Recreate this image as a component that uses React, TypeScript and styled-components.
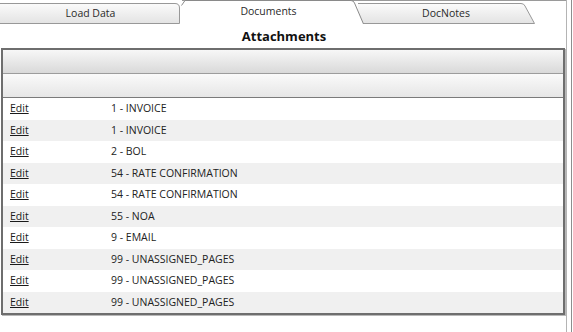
import React from "react";
import styled, { createGlobalStyle } from "styled-components";

const Global = createGlobalStyle`
  html, body { margin: 0; padding: 0; background: #ffffff; }
  body { font-family: "Open Sans", "Noto Sans", sans-serif; color: #222; }
`;

const Page = styled.div`
  display: flex;
  width: 573px;
  height: 332px;
  overflow: hidden;
`;

const Content = styled.div`
  width: 566px;
  display: flex;
  flex-direction: column;
`;

const Gutter = styled.div`
  width: 4px;
  border-left: 1px solid #b4b4b4;
  border-right: 1px solid #8e8e8e;
`;

const TabStrip = styled.div`
  position: relative;
  display: flex;
  height: 24px;
  &::before {
    content: "";
    position: absolute;
    left: 182px;
    right: 0;
    top: 0;
    height: 1px;
    background: #9a9a9a;
  }
`;

const Tab = styled.div<{ $w: number; $active?: boolean; $shift?: number }>`
  position: relative;
  width: ${(p) => p.$w}px;
  margin-left: ${(p) => p.$shift ?? 0}px;
  height: 24px;
  z-index: ${(p) => (p.$active ? 2 : 1)};
  display: flex;
  justify-content: center;
  align-items: ${(p) => (p.$active ? "flex-start" : "center")};
  padding-top: ${(p) => (p.$active ? 4 : 2)}px;
  box-sizing: border-box;
  font-size: 10.5px;
  color: #2a2a2a;
  & > svg {
    position: absolute;
    left: 0;
    top: 0;
  }
`;

const TabLabel = styled.span<{ $dx?: number }>`
  position: relative;
  margin-left: ${(p) => p.$dx ?? 0}px;
`;

const Title = styled.div`
  height: 24px;
  display: flex;
  align-items: center;
  justify-content: center;
  font-weight: 700;
  font-size: 13px;
  color: #111;
  padding-left: 2px;
  padding-bottom: 1px;
  box-sizing: border-box;
`;

const Grid = styled.div`
  margin-left: 1px;
  width: 564px;
  box-sizing: border-box;
  border: 2px solid #6e6e6e;
  box-shadow: 1px 1px 0 #b8b8b8;
  display: flex;
  flex-direction: column;
`;

const HeaderBar = styled.div<{ $from: string; $to: string; $line: string }>`
  height: 23px;
  background: linear-gradient(${(p) => p.$from}, ${(p) => p.$to});
  border-bottom: 1px solid ${(p) => p.$line};
`;

const Row = styled.div<{ $alt: boolean }>`
  height: 21.5px;
  display: flex;
  align-items: center;
  padding-bottom: 1px;
  box-sizing: border-box;
  background: ${(p) => (p.$alt ? "#f0f0f0" : "#ffffff")};
  font-size: 10.5px;
  color: #222;
`;

const EditCell = styled.div`
  width: 108px;
  padding-left: 7px;
  box-sizing: border-box;
`;

const EditLink = styled.a`
  color: #1a1a1a;
  text-decoration: underline;
  cursor: pointer;
`;

const TypeCell = styled.div`
  flex: 1;
`;

const rows = [
  "1 - INVOICE",
  "1 - INVOICE",
  "2 - BOL",
  "54 - RATE CONFIRMATION",
  "54 - RATE CONFIRMATION",
  "55 - NOA",
  "9 - EMAIL",
  "99 - UNASSIGNED_PAGES",
  "99 - UNASSIGNED_PAGES",
  "99 - UNASSIGNED_PAGES",
];

const TabGrad = () => (
  <defs>
    <linearGradient id="tg" x1="0" y1="0" x2="0" y2="1">
      <stop offset="0" stopColor="#fbfbfb" />
      <stop offset="1" stopColor="#e3e3e3" />
    </linearGradient>
  </defs>
);

export default function App() {
  return (
    <Page>
      <Global />
      <Content>
        <TabStrip>
          <Tab $w={181}>
            <svg width="181" height="24" viewBox="0 0 181 24">
              <TabGrad />
              <path
                d="M0 3.5 H175 Q179.5 3.5 179.5 8 V23.5 H0 Z"
                fill="url(#tg)"
                stroke="none"
              />
              <path
                d="M0 3.5 H175 Q179.5 3.5 179.5 8 V23.5 H0"
                fill="none"
                stroke="#989898"
              />
            </svg>
            <TabLabel>Load Data</TabLabel>
          </Tab>
          <Tab $w={187} $active $shift={-3}>
            <svg width="187" height="24" viewBox="0 0 187 24">
              <path
                d="M3 6 L7 0.5 H173 Q175.5 0.5 176.5 3 L185.5 24 H3 Z"
                fill="#ffffff"
              />
              <path
                d="M3.5 5.5 L7 0.5 H173 Q175.5 0.5 176.5 3 L185.5 24"
                fill="none"
                stroke="#8a8a8a"
              />
            </svg>
            <TabLabel $dx={-6}>Documents</TabLabel>
          </Tab>
          <Tab $w={178} $shift={-7}>
            <svg width="178" height="24" viewBox="0 0 178 24">
              <TabGrad />
              <path
                d="M0 3.5 H163 Q166 3.5 167 6 L176.5 23.5 H0 Z"
                fill="url(#tg)"
              />
              <path
                d="M0 3.5 H163 Q166 3.5 167 6 L176.5 23.5 H0"
                fill="none"
                stroke="#989898"
              />
            </svg>
            <TabLabel $dx={-2}>DocNotes</TabLabel>
          </Tab>
        </TabStrip>
        <Title>Attachments</Title>
        <Grid>
          <HeaderBar $from="#f7f7f7" $to="#d9d9d9" $line="#9c9c9c" />
          <HeaderBar $from="#fafafa" $to="#e6e6e6" $line="#7a7a7a" />
          {rows.map((r, i) => (
            <Row key={i} $alt={i % 2 === 1}>
              <EditCell>
                <EditLink>Edit</EditLink>
              </EditCell>
              <TypeCell>{r}</TypeCell>
            </Row>
          ))}
        </Grid>
      </Content>
      <Gutter />
    </Page>
  );
}
